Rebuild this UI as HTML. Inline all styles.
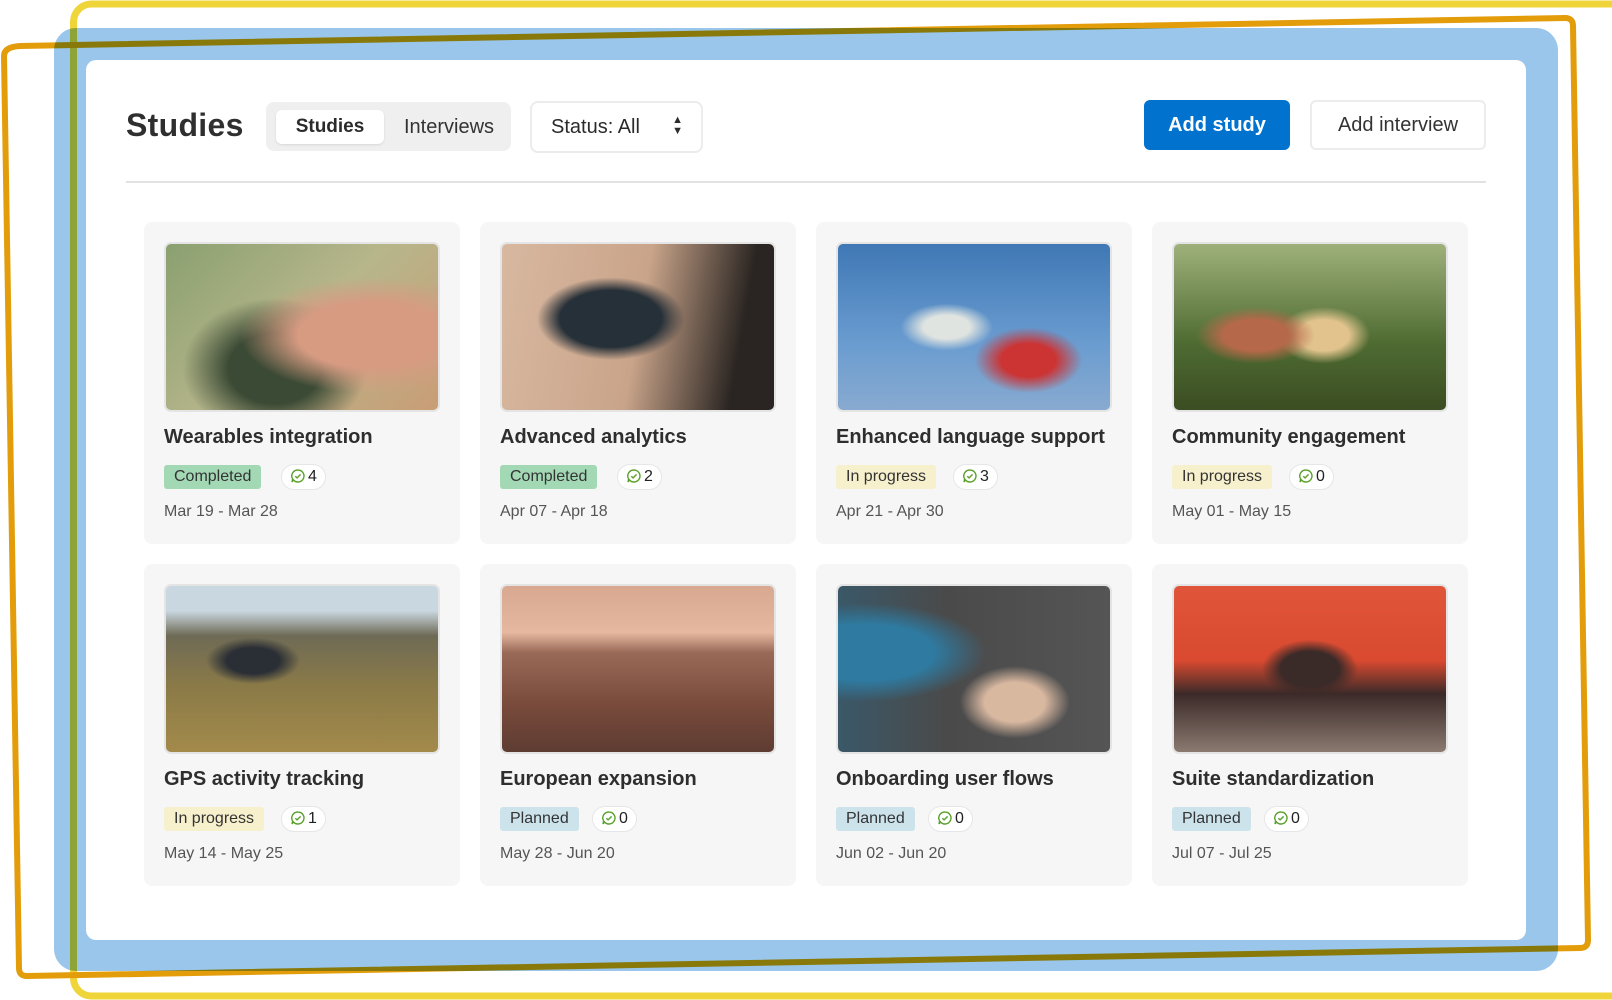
<!DOCTYPE html>
<html><head><meta charset="utf-8"><style>
*{box-sizing:border-box;margin:0;padding:0}
body{width:1612px;height:1000px;background:#fff;position:relative;overflow:hidden;font-family:"Liberation Sans",sans-serif;color:#2b2b2b}
.blue{position:absolute;left:54px;top:28px;width:1504px;height:943px;background:#99c6ea;border-radius:22px}
.white{position:absolute;left:86px;top:60px;width:1440px;height:880px;background:#fff;border-radius:10px}
svg.ov{position:absolute;left:0;top:0;mix-blend-mode:multiply}
.title{position:absolute;left:126px;top:107px;font-size:32px;font-weight:bold;color:#2f2f2f;letter-spacing:0.3px}
.seg{position:absolute;left:266px;top:102px;width:245px;height:49px;background:#efefef;border-radius:8px}
.seg .on{position:absolute;left:10px;top:8px;width:108px;height:34px;background:#fff;border-radius:6px;box-shadow:0 1px 2px rgba(0,0,0,.1);font-weight:bold;font-size:19px;text-align:center;line-height:34px}
.seg .off{position:absolute;left:138px;top:8px;font-size:20px;line-height:34px;color:#333}
.sel{position:absolute;left:530px;top:101px;width:173px;height:52px;border:2px solid #ececec;border-radius:8px;font-size:20px;line-height:48px;padding-left:19px}
.sel .ar{position:absolute;right:18px;top:12px;font-size:11px;line-height:11px}
.btn1{position:absolute;left:1144px;top:100px;width:146px;height:50px;background:#0272cf;border-radius:6px;color:#fff;font-weight:bold;font-size:20px;text-align:center;line-height:50px}
.btn2{position:absolute;left:1310px;top:100px;width:176px;height:50px;border:2px solid #ececec;border-radius:6px;font-size:20px;text-align:center;line-height:46px;color:#333}
.hr{position:absolute;left:126px;top:181px;width:1360px;height:2px;background:#e2e2e2}
.card{position:absolute;width:316px;height:322px;background:#f6f6f6;border-radius:8px}
.img{position:absolute;left:20px;top:20px;width:276px;height:170px;border-radius:7px;border:2px solid #e4e4e4;overflow:hidden}
.ct{position:absolute;left:20px;top:204px;font-size:20px;font-weight:bold;color:#2e2e2e;white-space:nowrap}
.bd{position:absolute;left:20px;top:243px;height:24px;line-height:24px;font-size:16px;padding:0 10px;border-radius:3px;color:#333}
.cm{position:absolute;top:242px;height:26px;line-height:24px;font-size:16px;padding:0 8px 0 8px;border:1px solid #e6e6e6;background:#fff;border-radius:13px;color:#222}
.cm svg{vertical-align:-3px;margin-right:2px}
.dt{position:absolute;left:20px;top:281px;font-size:16px;color:#555}
.c{background:#a3d8b5}.p{background:#f7f0cc}.l{background:#cde3ec}
</style></head><body>
<div class="blue"></div>
<div class="white"></div>
<svg class="ov" width="1612" height="1000">
<rect x="73.5" y="4" width="1560" height="992" rx="18" fill="none" stroke="#efd43a" stroke-width="7"/>
<path d="M20 46 L1565 18 Q1573 18 1573 26 L1588 940 Q1588 948 1580 948 L27 976 Q19 976 19 968 L4 56 Q4 47 20 46 Z" fill="none" stroke="#e39c0a" stroke-width="6" stroke-linejoin="round"/>
</svg>
<div class="title">Studies</div>
<div class="seg"><div class="on">Studies</div><div class="off">Interviews</div></div>
<div class="sel">Status: All<div class="ar">▲<br>▼</div></div>
<div class="btn1">Add study</div>
<div class="btn2">Add interview</div>
<div class="hr"></div>

<div class="card" style="left:144px;top:222px"><div class="img" style="background:radial-gradient(ellipse at 75% 55%,#d79b82 0 25%,transparent 45%),radial-gradient(ellipse at 40% 75%,#3b4a35 0 20%,transparent 40%),linear-gradient(135deg,#8aa070,#b7b68b 50%,#c99d76)"></div><div class="ct">Wearables integration</div><div class="bd c">Completed</div><div class="cm" style="left:137px"><svg width="16" height="16" viewBox="0 0 16 16"><path d="M8 2a6 6 0 1 1-4.5 10L2 14l.6-3A6 6 0 0 1 8 2z" fill="none" stroke="#5aa02c" stroke-width="1.4"/><path d="M5.3 8.2l1.8 1.7 3.5-3.5" fill="none" stroke="#5aa02c" stroke-width="1.4"/></svg>4</div><div class="dt">Mar 19 - Mar 28</div></div>

<div class="card" style="left:480px;top:222px"><div class="img" style="background:radial-gradient(ellipse at 40% 45%,#263038 0 22%,transparent 32%),linear-gradient(100deg,#d8b8a0,#c9a48a 50%,#2a2522 85%)"></div><div class="ct">Advanced analytics</div><div class="bd c">Completed</div><div class="cm" style="left:137px"><svg width="16" height="16" viewBox="0 0 16 16"><path d="M8 2a6 6 0 1 1-4.5 10L2 14l.6-3A6 6 0 0 1 8 2z" fill="none" stroke="#5aa02c" stroke-width="1.4"/><path d="M5.3 8.2l1.8 1.7 3.5-3.5" fill="none" stroke="#5aa02c" stroke-width="1.4"/></svg>2</div><div class="dt">Apr 07 - Apr 18</div></div>

<div class="card" style="left:816px;top:222px"><div class="img" style="background:radial-gradient(ellipse at 40% 50%,#e0e4e0 0 10%,transparent 20%),radial-gradient(ellipse at 70% 70%,#c33 0 10%,transparent 20%),linear-gradient(180deg,#3f78b5,#6a9cd0 60%,#88aad0)"></div><div class="ct">Enhanced language support</div><div class="bd p">In progress</div><div class="cm" style="left:137px"><svg width="16" height="16" viewBox="0 0 16 16"><path d="M8 2a6 6 0 1 1-4.5 10L2 14l.6-3A6 6 0 0 1 8 2z" fill="none" stroke="#5aa02c" stroke-width="1.4"/><path d="M5.3 8.2l1.8 1.7 3.5-3.5" fill="none" stroke="#5aa02c" stroke-width="1.4"/></svg>3</div><div class="dt">Apr 21 - Apr 30</div></div>

<div class="card" style="left:1152px;top:222px"><div class="img" style="background:radial-gradient(ellipse at 30% 55%,#b5694a 0 12%,transparent 22%),radial-gradient(ellipse at 55% 55%,#e2c38d 0 12%,transparent 22%),linear-gradient(180deg,#9fb17a,#4e6b32 60%,#3b4d22)"></div><div class="ct">Community engagement</div><div class="bd p">In progress</div><div class="cm" style="left:137px"><svg width="16" height="16" viewBox="0 0 16 16"><path d="M8 2a6 6 0 1 1-4.5 10L2 14l.6-3A6 6 0 0 1 8 2z" fill="none" stroke="#5aa02c" stroke-width="1.4"/><path d="M5.3 8.2l1.8 1.7 3.5-3.5" fill="none" stroke="#5aa02c" stroke-width="1.4"/></svg>0</div><div class="dt">May 01 - May 15</div></div>

<div class="card" style="left:144px;top:564px"><div class="img" style="background:radial-gradient(ellipse at 32% 45%,#2a2e35 0 10%,transparent 18%),linear-gradient(180deg,#c9d7e0 0 15%,#6e6a55 30%,#8a7a48 60%,#a38a4a)"></div><div class="ct">GPS activity tracking</div><div class="bd p">In progress</div><div class="cm" style="left:137px"><svg width="16" height="16" viewBox="0 0 16 16"><path d="M8 2a6 6 0 1 1-4.5 10L2 14l.6-3A6 6 0 0 1 8 2z" fill="none" stroke="#5aa02c" stroke-width="1.4"/><path d="M5.3 8.2l1.8 1.7 3.5-3.5" fill="none" stroke="#5aa02c" stroke-width="1.4"/></svg>1</div><div class="dt">May 14 - May 25</div></div>

<div class="card" style="left:480px;top:564px"><div class="img" style="background:linear-gradient(180deg,#d8a890 0,#e6b8a0 28%,#9a6a58 40%,#7a4c3c 70%,#5e3c32)"></div><div class="ct">European expansion</div><div class="bd l">Planned</div><div class="cm" style="left:112px"><svg width="16" height="16" viewBox="0 0 16 16"><path d="M8 2a6 6 0 1 1-4.5 10L2 14l.6-3A6 6 0 0 1 8 2z" fill="none" stroke="#5aa02c" stroke-width="1.4"/><path d="M5.3 8.2l1.8 1.7 3.5-3.5" fill="none" stroke="#5aa02c" stroke-width="1.4"/></svg>0</div><div class="dt">May 28 - Jun 20</div></div>

<div class="card" style="left:816px;top:564px"><div class="img" style="background:radial-gradient(ellipse at 10% 40%,#2f7aa0 0 20%,transparent 35%),radial-gradient(ellipse at 65% 70%,#d9b8a0 0 12%,transparent 22%),linear-gradient(90deg,#3a5868,#4a4a4a 40%,#555)"></div><div class="ct">Onboarding user flows</div><div class="bd l">Planned</div><div class="cm" style="left:112px"><svg width="16" height="16" viewBox="0 0 16 16"><path d="M8 2a6 6 0 1 1-4.5 10L2 14l.6-3A6 6 0 0 1 8 2z" fill="none" stroke="#5aa02c" stroke-width="1.4"/><path d="M5.3 8.2l1.8 1.7 3.5-3.5" fill="none" stroke="#5aa02c" stroke-width="1.4"/></svg>0</div><div class="dt">Jun 02 - Jun 20</div></div>

<div class="card" style="left:1152px;top:564px"><div class="img" style="background:radial-gradient(ellipse at 50% 50%,#3a2a28 0 15%,transparent 25%),linear-gradient(180deg,#e0553a 0,#d94a30 45%,#3b2a28 65%,#8a7a70)"></div><div class="ct">Suite standardization</div><div class="bd l">Planned</div><div class="cm" style="left:112px"><svg width="16" height="16" viewBox="0 0 16 16"><path d="M8 2a6 6 0 1 1-4.5 10L2 14l.6-3A6 6 0 0 1 8 2z" fill="none" stroke="#5aa02c" stroke-width="1.4"/><path d="M5.3 8.2l1.8 1.7 3.5-3.5" fill="none" stroke="#5aa02c" stroke-width="1.4"/></svg>0</div><div class="dt">Jul 07 - Jul 25</div></div>
</body></html>
